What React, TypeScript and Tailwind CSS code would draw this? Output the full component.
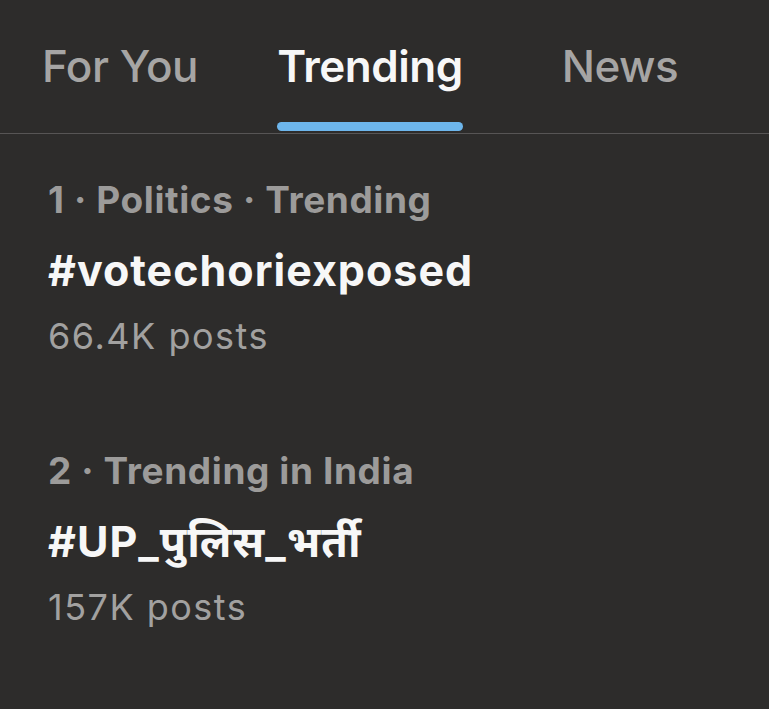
import React from "react"

const tabs = [
  { label: "For You", active: false },
  { label: "Trending", active: true },
  { label: "News", active: false },
]

const trends = [
  { meta: "1 · Politics · Trending", tag: "#votechoriexposed", posts: "66.4K posts" },
  { meta: "2 · Trending in India", tag: "#UP_पुलिस_भर्ती", posts: "157K posts" },
]

export default function App() {
  return (
    <div
      className="w-[769px] h-[709px] overflow-hidden bg-[#2d2c2b]"
      style={{ fontFamily: 'Inter, "Noto Sans", "Noto Sans Devanagari", sans-serif' }}
    >
      {/* tab bar */}
      <div className="h-[134px] border-b border-[#575555] flex -ml-[5px]">
        {tabs.map((t) => (
          <div key={t.label} className="w-[250px] flex justify-center">
            <div className="flex flex-col pt-[38px]">
              <span
                className={
                  "text-[44px] leading-[56px] tracking-[-0.5px] " +
                  (t.active ? "text-[#f7f7f7] font-semibold" : "text-[#a6a5a4] font-medium")
                }
              >
                {t.label}
              </span>
              {t.active && <div className="mt-[28px] h-[9px] rounded-full bg-[#6db6ec]" />}
            </div>
          </div>
        ))}
      </div>

      {/* trends */}
      <div className="pl-[48px] pt-[42px]">
        {trends.map((tr, i) => (
          <div key={tr.tag} className={i > 0 ? "mt-[89px]" : ""}>
            <div className="text-[37px] leading-[48px] tracking-[0.6px] font-bold text-[#9c9b9a]">{tr.meta}</div>
            <div className="mt-[18px] text-[43px] leading-[56px] tracking-[1px] font-bold text-[#f7f7f7]">{tr.tag}</div>
            <div className="mt-[16px] text-[36px] leading-[44px] tracking-[1.5px] text-[#a2a1a0]">{tr.posts}</div>
          </div>
        ))}
      </div>
    </div>
  )
}
